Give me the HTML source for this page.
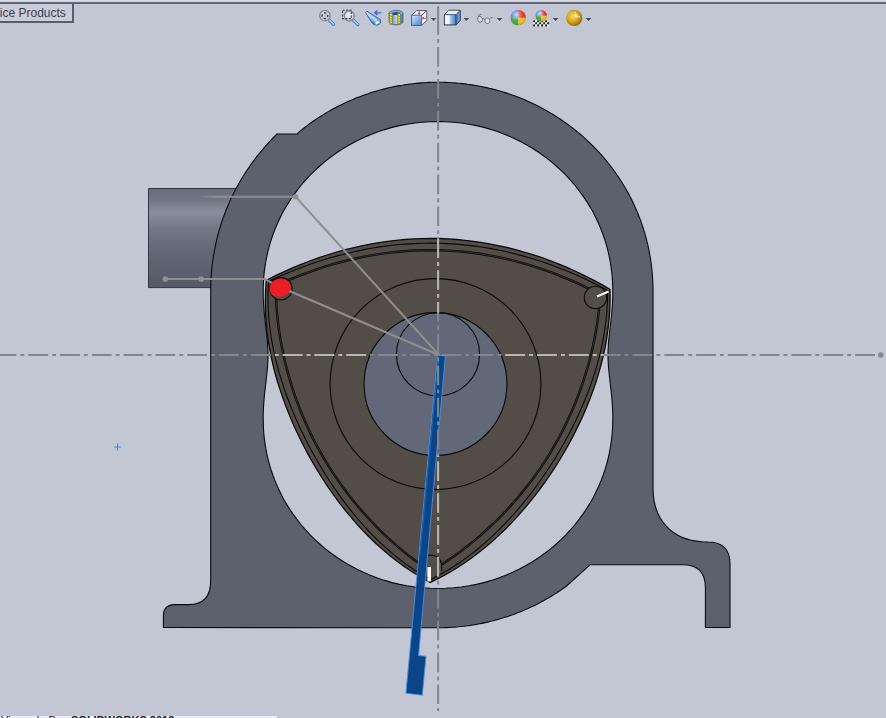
<!DOCTYPE html>
<html><head><meta charset="utf-8"><title>SolidWorks</title>
<style>
html,body{margin:0;padding:0;}
body{width:886px;height:718px;overflow:hidden;background:#c3c7d3;position:relative;font-family:"Liberation Sans",sans-serif;}
#view{position:absolute;left:0;top:0;width:886px;height:718px;}
#tab{position:absolute;left:-11.8px;top:4px;width:82px;height:16.5px;border:2px solid #5a5c6e;border-top:none;background:#cacdd9;color:#3a3c4e;font-size:12px;line-height:17px;white-space:nowrap;}
#tab span{position:absolute;left:9.6px;top:0.5px;}
#topline{position:absolute;left:0;top:0;width:886px;height:4.4px;background:linear-gradient(#dfe1ea 0,#c9ccd8 45%,#6c6e82 62%,#56586a 100%);}
#bottom{position:absolute;left:0;top:715.7px;width:277px;height:3px;background:#eceef3;overflow:hidden;font-size:11px;line-height:11px;color:#1a1a1a;white-space:nowrap;}
#bottom span{position:absolute;left:71px;top:-0.6px;font-weight:bold;}
#bottom i{position:absolute;left:1px;top:-0.6px;font-style:normal;}
</style></head><body>
<svg id="view" width="886" height="718" viewBox="0 0 886 718">
<defs>
<linearGradient id="pipe" x1="0" y1="0" x2="0" y2="1">
<stop offset="0" stop-color="#6a6e7c"/><stop offset="0.1" stop-color="#707482"/><stop offset="0.24" stop-color="#8a8e9c"/><stop offset="0.4" stop-color="#747886"/><stop offset="0.62" stop-color="#656977"/><stop offset="1" stop-color="#555966"/>
</linearGradient>
<linearGradient id="fade" gradientUnits="userSpaceOnUse" x1="198" y1="0" x2="216" y2="0"><stop offset="0" stop-color="#8e8e8c" stop-opacity="0"/><stop offset="1" stop-color="#8e8e8c" stop-opacity="1"/></linearGradient>
<clipPath id="rotclip"><path d="M430.3 582.4 L439.4 577.9 L448.1 573.2 L456.4 568.2 L464.4 563.0 L472.1 557.6 L479.4 552.0 L486.5 546.3 L493.3 540.4 L499.9 534.4 L506.3 528.2 L512.4 521.9 L518.4 515.4 L524.1 508.9 L529.7 502.2 L535.1 495.4 L540.3 488.5 L545.4 481.6 L550.3 474.5 L555.0 467.3 L559.6 460.0 L564.0 452.6 L568.2 445.2 L572.3 437.6 L576.2 429.9 L580.0 422.1 L583.6 414.3 L587.0 406.3 L590.2 398.2 L593.3 389.9 L596.1 381.6 L598.7 373.1 L601.1 364.5 L603.3 355.8 L605.2 346.8 L606.8 337.8 L608.1 328.5 L609.1 319.0 L609.8 309.3 L610.1 299.4 L609.9 289.3 L601.5 284.4 L593.0 279.9 L584.5 275.6 L576.0 271.5 L567.5 267.7 L559.0 264.1 L550.5 260.8 L542.0 257.7 L533.5 254.9 L524.9 252.3 L516.4 249.9 L507.9 247.7 L499.3 245.8 L490.8 244.1 L482.2 242.6 L473.6 241.3 L465.1 240.3 L456.5 239.5 L447.9 238.9 L439.3 238.5 L430.7 238.4 L422.1 238.6 L413.5 238.9 L404.9 239.5 L396.3 240.3 L387.6 241.4 L379.0 242.6 L370.4 244.1 L361.7 245.8 L353.1 247.8 L344.4 249.9 L335.8 252.3 L327.1 255.0 L318.4 257.8 L309.7 261.0 L301.1 264.3 L292.4 267.9 L283.7 271.8 L275.0 275.9 L266.3 280.3 L265.6 290.4 L265.3 300.4 L265.4 310.1 L265.9 319.6 L266.7 328.9 L267.8 338.1 L269.3 347.1 L271.0 356.0 L272.9 364.7 L275.1 373.3 L277.5 381.7 L280.2 390.1 L283.0 398.3 L286.0 406.5 L289.2 414.5 L292.5 422.5 L296.1 430.4 L299.8 438.1 L303.6 445.8 L307.6 453.4 L311.8 460.9 L316.2 468.4 L320.7 475.7 L325.3 482.9 L330.2 490.1 L335.2 497.1 L340.4 504.1 L345.8 511.0 L351.4 517.7 L357.1 524.4 L363.1 530.9 L369.4 537.3 L375.9 543.5 L382.7 549.6 L389.7 555.6 L397.1 561.3 L404.8 566.9 L412.9 572.3 L421.4 577.5 Z M506.9 384.0 a71.4 71.4 0 1 0 -142.8 0 a71.4 71.4 0 1 0 142.8 0 Z" clip-rule="evenodd"/></clipPath>
</defs>
<!-- intake pipe -->
<path d="M148.5 188.5 L236 188.5 L236 287.6 L148.5 287.6 Z" fill="url(#pipe)" stroke="#34363f" stroke-width="1"/>
<!-- housing -->
<path d="M297.5 133.3 L299.4 131.7 L301.4 130.1 L303.4 128.5 L305.4 126.9 L307.5 125.4 L309.6 123.8 L311.7 122.3 L313.8 120.8 L315.9 119.4 L318.1 117.9 L320.3 116.5 L322.5 115.1 L324.7 113.8 L327.0 112.4 L329.2 111.1 L331.5 109.8 L333.8 108.5 L336.2 107.3 L338.5 106.1 L340.9 104.9 L343.3 103.7 L345.7 102.6 L348.1 101.5 L350.5 100.4 L353.0 99.4 L355.5 98.3 L358.0 97.3 L360.5 96.4 L363.0 95.4 L365.5 94.5 L368.1 93.7 L370.6 92.8 L373.2 92.0 L375.8 91.2 L378.4 90.5 L381.0 89.8 L383.6 89.1 L386.3 88.4 L388.9 87.8 L391.6 87.2 L394.2 86.6 L396.9 86.1 L399.6 85.6 L402.3 85.2 L405.0 84.7 L407.7 84.4 L410.4 84.0 L413.1 83.7 L415.8 83.4 L418.5 83.1 L421.2 82.9 L424.0 82.7 L426.7 82.5 L429.4 82.4 L432.2 82.3 L434.9 82.3 L437.6 82.3 L440.4 82.3 L443.1 82.3 L445.9 82.4 L448.6 82.5 L451.4 82.7 L454.1 82.8 L456.9 83.1 L459.6 83.3 L462.3 83.6 L465.1 83.9 L467.8 84.3 L470.5 84.6 L473.2 85.1 L475.9 85.5 L478.6 86.0 L481.3 86.5 L484.0 87.1 L486.6 87.6 L489.3 88.3 L491.9 88.9 L494.6 89.6 L497.2 90.3 L499.8 91.0 L502.4 91.8 L505.0 92.6 L507.6 93.4 L510.1 94.3 L512.7 95.2 L515.2 96.1 L517.7 97.1 L520.3 98.1 L522.7 99.1 L525.2 100.1 L527.7 101.2 L530.1 102.3 L532.5 103.4 L534.9 104.6 L537.3 105.8 L539.7 107.0 L542.0 108.2 L544.4 109.5 L546.7 110.8 L548.9 112.1 L551.2 113.4 L553.5 114.8 L555.7 116.2 L557.9 117.6 L560.1 119.0 L562.2 120.5 L564.3 122.0 L566.5 123.5 L568.5 125.0 L570.6 126.5 L572.7 128.1 L574.7 129.7 L576.7 131.3 L578.6 132.9 L580.6 134.5 L582.5 136.2 L584.4 137.9 L586.2 139.6 L588.1 141.3 L589.9 143.0 L591.7 144.8 L593.4 146.5 L595.2 148.3 L596.9 150.1 L598.6 151.9 L600.2 153.7 L601.9 155.5 L603.5 157.4 L605.0 159.2 L606.6 161.1 L608.1 163.0 L609.6 164.9 L611.1 166.8 L612.5 168.7 L613.9 170.6 L615.3 172.5 L616.6 174.5 L618.0 176.4 L619.3 178.3 L620.5 180.3 L621.8 182.3 L623.0 184.2 L624.2 186.2 L625.4 188.2 L626.5 190.1 L627.6 192.1 L628.7 194.1 L629.7 196.1 L630.8 198.1 L631.8 200.1 L632.8 202.1 L633.7 204.1 L634.6 206.0 L635.5 208.0 L636.4 210.0 L637.2 212.0 L638.1 214.0 L638.8 216.0 L639.6 218.0 L640.4 219.9 L641.1 221.9 L641.8 223.9 L642.4 225.9 L643.1 227.8 L643.7 229.8 L644.3 231.7 L644.9 233.7 L645.4 235.6 L646.0 237.5 L646.5 239.4 L646.9 241.4 L647.4 243.3 L647.9 245.2 L648.3 247.1 L648.7 248.9 L649.1 250.8 L649.4 252.7 L649.7 254.5 L650.1 256.3 L650.4 258.2 L650.7 260.0 L650.9 261.8 L651.2 263.6 L651.4 265.4 L651.6 267.1 L651.8 268.9 L652.0 270.6 L652.1 272.3 L652.3 274.0 L652.4 275.7 L652.5 277.4 L652.6 279.1 L652.7 280.8 L652.8 282.4 L652.9 284.0 L652.9 285.6 L653.0 287.2 L653.0 288.8 L653.0 290.4 L653.0 291.9 L653.0 488 C653.0 520 672 540 702 541.8 L708 542 Q730 542 730 564 L730 627.5 L705.4 627.5 L705.4 588 Q705.4 564.8 683 564.8 L590 564.8 L566.0 586.5 L564.2 587.8 L562.4 589.0 L560.6 590.3 L558.7 591.5 L556.9 592.7 L555.0 593.9 L553.2 595.1 L551.3 596.2 L549.4 597.4 L547.4 598.5 L545.5 599.6 L543.5 600.7 L541.6 601.8 L539.6 602.8 L537.6 603.9 L535.6 604.9 L533.6 605.9 L531.5 606.8 L529.5 607.8 L527.4 608.7 L525.4 609.6 L523.3 610.5 L521.2 611.4 L519.1 612.3 L517.0 613.1 L514.8 613.9 L512.7 614.7 L510.5 615.4 L508.4 616.2 L506.2 616.9 L504.0 617.6 L501.8 618.3 L499.6 618.9 L497.4 619.6 L495.2 620.2 L493.0 620.8 L490.8 621.3 L488.5 621.9 L486.3 622.4 L484.0 622.9 L481.8 623.4 L479.5 623.8 L477.2 624.2 L474.9 624.6 L472.7 625.0 L470.4 625.4 L468.1 625.7 L465.8 626.0 L463.5 626.3 L461.2 626.5 L458.9 626.8 L456.6 627.0 L454.2 627.2 L451.9 627.3 L449.6 627.4 L447.3 627.6 L445.0 627.6 L442.6 627.7 L440.3 627.7 L438.0 627.8 L172 627.5 L163.4 627.5 L163.4 616 Q163.4 604.6 175 604.6 L188.5 604.6 Q210.7 604.6 210.7 581 L210.7 291.9 L210.7 289.7 L210.7 287.5 L210.8 285.3 L210.8 283.0 L210.9 280.7 L211.1 278.4 L211.2 276.0 L211.4 273.6 L211.6 271.2 L211.8 268.8 L212.1 266.3 L212.4 263.8 L212.7 261.3 L213.1 258.8 L213.4 256.2 L213.9 253.6 L214.3 251.0 L214.8 248.4 L215.4 245.8 L215.9 243.1 L216.6 240.4 L217.2 237.7 L217.9 235.0 L218.6 232.3 L219.4 229.5 L220.3 226.8 L221.1 224.0 L222.0 221.2 L223.0 218.4 L224.0 215.7 L225.0 212.9 L226.1 210.0 L227.3 207.2 L228.5 204.4 L229.7 201.6 L231.0 198.8 L232.3 196.0 L233.7 193.2 L235.1 190.3 L236.6 187.5 L238.2 184.7 L239.8 181.9 L241.4 179.1 L243.1 176.3 L244.8 173.6 L246.6 170.8 L248.5 168.1 L250.3 165.3 L252.3 162.6 L254.3 159.9 L256.3 157.2 L258.4 154.5 L260.6 151.9 L262.8 149.3 L265.0 146.7 L267.3 144.1 L269.7 141.5 L272.1 139.0 L274.5 136.5 L277.0 134.0 L297.5 134 Z M438.0 588.5 L445.8 588.3 L453.5 587.8 L461.2 587.0 L468.9 585.8 L476.5 584.4 L484.0 582.6 L491.4 580.4 L498.6 578.0 L505.7 575.3 L512.7 572.3 L519.4 569.1 L526.0 565.5 L532.4 561.8 L538.6 557.8 L544.5 553.5 L550.3 549.1 L555.7 544.5 L561.0 539.7 L565.9 534.8 L570.6 529.7 L575.1 524.5 L579.2 519.2 L583.1 513.9 L586.8 508.4 L590.2 502.9 L593.3 497.4 L596.1 491.8 L598.7 486.3 L601.0 480.7 L603.1 475.2 L605.0 469.7 L606.6 464.3 L608.0 459.0 L609.2 453.7 L610.2 448.5 L611.0 443.4 L611.7 438.4 L612.2 433.5 L612.5 428.8 L612.7 424.1 L612.8 419.6 L612.8 415.2 L612.7 411.0 L612.5 406.9 L612.2 402.9 L611.9 399.0 L611.6 395.3 L611.2 391.7 L610.8 388.2 L610.4 384.8 L610.0 381.5 L609.7 378.3 L609.3 375.2 L609.0 372.1 L608.7 369.2 L608.4 366.3 L608.3 363.4 L608.1 360.6 L608.0 357.8 L608.0 355.0 L608.0 352.2 L608.1 349.4 L608.3 346.6 L608.4 343.7 L608.7 340.8 L609.0 337.9 L609.3 334.8 L609.7 331.7 L610.0 328.5 L610.4 325.2 L610.8 321.8 L611.2 318.3 L611.6 314.7 L611.9 311.0 L612.2 307.1 L612.5 303.1 L612.7 299.0 L612.8 294.8 L612.8 290.4 L612.7 285.9 L612.5 281.2 L612.2 276.5 L611.7 271.6 L611.0 266.6 L610.2 261.5 L609.2 256.3 L608.0 251.0 L606.6 245.7 L605.0 240.3 L603.1 234.8 L601.0 229.3 L598.7 223.7 L596.1 218.2 L593.3 212.6 L590.2 207.1 L586.8 201.6 L583.1 196.1 L579.2 190.8 L575.1 185.5 L570.6 180.3 L565.9 175.2 L561.0 170.3 L555.7 165.5 L550.3 160.9 L544.5 156.5 L538.6 152.2 L532.4 148.2 L526.0 144.5 L519.4 140.9 L512.7 137.7 L505.7 134.7 L498.6 132.0 L491.4 129.6 L484.0 127.4 L476.5 125.6 L468.9 124.2 L461.2 123.0 L453.5 122.2 L445.8 121.7 L438.0 121.5 L430.2 121.7 L422.5 122.2 L414.8 123.0 L407.1 124.2 L399.5 125.6 L392.0 127.4 L384.6 129.6 L377.4 132.0 L370.3 134.7 L363.3 137.7 L356.6 140.9 L350.0 144.5 L343.6 148.2 L337.4 152.2 L331.5 156.5 L325.7 160.9 L320.3 165.5 L315.0 170.3 L310.1 175.2 L305.4 180.3 L300.9 185.5 L296.8 190.8 L292.9 196.1 L289.2 201.6 L285.8 207.1 L282.7 212.6 L279.9 218.2 L277.3 223.7 L275.0 229.3 L272.9 234.8 L271.0 240.3 L269.4 245.7 L268.0 251.0 L266.8 256.3 L265.8 261.5 L265.0 266.6 L264.3 271.6 L263.8 276.5 L263.5 281.2 L263.3 285.9 L263.2 290.4 L263.2 294.8 L263.3 299.0 L263.5 303.1 L263.8 307.1 L264.1 311.0 L264.4 314.7 L264.8 318.3 L265.2 321.8 L265.6 325.2 L266.0 328.5 L266.3 331.7 L266.7 334.8 L267.0 337.9 L267.3 340.8 L267.6 343.7 L267.7 346.6 L267.9 349.4 L268.0 352.2 L268.0 355.0 L268.0 357.8 L267.9 360.6 L267.7 363.4 L267.6 366.3 L267.3 369.2 L267.0 372.1 L266.7 375.2 L266.3 378.3 L266.0 381.5 L265.6 384.8 L265.2 388.2 L264.8 391.7 L264.4 395.3 L264.1 399.0 L263.8 402.9 L263.5 406.9 L263.3 411.0 L263.2 415.2 L263.2 419.6 L263.3 424.1 L263.5 428.8 L263.8 433.5 L264.3 438.4 L265.0 443.4 L265.8 448.5 L266.8 453.7 L268.0 459.0 L269.4 464.3 L271.0 469.7 L272.9 475.2 L275.0 480.7 L277.3 486.3 L279.9 491.8 L282.7 497.4 L285.8 502.9 L289.2 508.4 L292.9 513.9 L296.8 519.2 L300.9 524.5 L305.4 529.7 L310.1 534.8 L315.0 539.7 L320.3 544.5 L325.7 549.1 L331.5 553.5 L337.4 557.8 L343.6 561.8 L350.0 565.5 L356.6 569.1 L363.3 572.3 L370.3 575.3 L377.4 578.0 L384.6 580.4 L392.0 582.6 L399.5 584.4 L407.1 585.8 L414.8 587.0 L422.5 587.8 L430.2 588.3 Z" fill="#5d616e" fill-rule="evenodd" stroke="#0a0a0c" stroke-width="1.1" stroke-linejoin="round"/>
<!-- rotor -->
<path d="M430.3 582.4 L439.4 577.9 L448.1 573.2 L456.4 568.2 L464.4 563.0 L472.1 557.6 L479.4 552.0 L486.5 546.3 L493.3 540.4 L499.9 534.4 L506.3 528.2 L512.4 521.9 L518.4 515.4 L524.1 508.9 L529.7 502.2 L535.1 495.4 L540.3 488.5 L545.4 481.6 L550.3 474.5 L555.0 467.3 L559.6 460.0 L564.0 452.6 L568.2 445.2 L572.3 437.6 L576.2 429.9 L580.0 422.1 L583.6 414.3 L587.0 406.3 L590.2 398.2 L593.3 389.9 L596.1 381.6 L598.7 373.1 L601.1 364.5 L603.3 355.8 L605.2 346.8 L606.8 337.8 L608.1 328.5 L609.1 319.0 L609.8 309.3 L610.1 299.4 L609.9 289.3 L601.5 284.4 L593.0 279.9 L584.5 275.6 L576.0 271.5 L567.5 267.7 L559.0 264.1 L550.5 260.8 L542.0 257.7 L533.5 254.9 L524.9 252.3 L516.4 249.9 L507.9 247.7 L499.3 245.8 L490.8 244.1 L482.2 242.6 L473.6 241.3 L465.1 240.3 L456.5 239.5 L447.9 238.9 L439.3 238.5 L430.7 238.4 L422.1 238.6 L413.5 238.9 L404.9 239.5 L396.3 240.3 L387.6 241.4 L379.0 242.6 L370.4 244.1 L361.7 245.8 L353.1 247.8 L344.4 249.9 L335.8 252.3 L327.1 255.0 L318.4 257.8 L309.7 261.0 L301.1 264.3 L292.4 267.9 L283.7 271.8 L275.0 275.9 L266.3 280.3 L265.6 290.4 L265.3 300.4 L265.4 310.1 L265.9 319.6 L266.7 328.9 L267.8 338.1 L269.3 347.1 L271.0 356.0 L272.9 364.7 L275.1 373.3 L277.5 381.7 L280.2 390.1 L283.0 398.3 L286.0 406.5 L289.2 414.5 L292.5 422.5 L296.1 430.4 L299.8 438.1 L303.6 445.8 L307.6 453.4 L311.8 460.9 L316.2 468.4 L320.7 475.7 L325.3 482.9 L330.2 490.1 L335.2 497.1 L340.4 504.1 L345.8 511.0 L351.4 517.7 L357.1 524.4 L363.1 530.9 L369.4 537.3 L375.9 543.5 L382.7 549.6 L389.7 555.6 L397.1 561.3 L404.8 566.9 L412.9 572.3 L421.4 577.5 Z" fill="#524d46" stroke="#0a0a0c" stroke-width="1.3" stroke-linejoin="miter"/>
<path d="M430.4 579.7 L439.1 575.1 L447.5 570.3 L455.5 565.3 L463.2 560.1 L470.6 554.6 L477.7 549.0 L484.5 543.3 L491.1 537.4 L497.4 531.3 L503.6 525.2 L509.5 518.9 L515.3 512.5 L520.9 505.9 L526.3 499.3 L531.6 492.6 L536.7 485.8 L541.6 478.8 L546.4 471.8 L551.0 464.8 L555.6 457.6 L559.9 450.3 L564.1 442.9 L568.2 435.5 L572.1 427.9 L575.9 420.3 L579.5 412.6 L582.9 404.7 L586.2 396.8 L589.3 388.7 L592.2 380.6 L594.9 372.3 L597.4 363.9 L599.7 355.3 L601.7 346.6 L603.5 337.8 L604.9 328.7 L606.1 319.5 L607.0 310.1 L607.5 300.4 L607.6 290.6 L599.2 286.1 L590.8 281.8 L582.5 277.8 L574.1 274.0 L565.7 270.5 L557.3 267.2 L548.9 264.1 L540.5 261.2 L532.1 258.5 L523.7 256.1 L515.2 253.9 L506.8 251.8 L498.4 250.0 L489.9 248.4 L481.5 247.0 L473.0 245.9 L464.6 244.9 L456.1 244.1 L447.7 243.6 L439.2 243.2 L430.7 243.1 L422.2 243.2 L413.7 243.6 L405.2 244.1 L396.7 244.8 L388.2 245.8 L379.7 246.9 L371.2 248.3 L362.7 249.9 L354.2 251.7 L345.6 253.7 L337.1 255.9 L328.5 258.3 L320.0 261.0 L311.4 263.8 L302.9 266.9 L294.3 270.3 L285.7 273.8 L277.1 277.6 L268.6 281.7 L268.1 291.6 L268.0 301.3 L268.4 310.7 L269.0 320.0 L270.0 329.1 L271.3 338.1 L272.9 346.9 L274.7 355.5 L276.8 364.1 L279.1 372.5 L281.6 380.7 L284.3 388.9 L287.1 397.0 L290.2 405.0 L293.4 412.9 L296.8 420.7 L300.3 428.5 L304.0 436.1 L307.8 443.7 L311.8 451.2 L315.9 458.6 L320.2 465.9 L324.6 473.2 L329.1 480.3 L333.9 487.4 L338.7 494.4 L343.8 501.3 L349.0 508.2 L354.4 514.9 L360.0 521.5 L365.8 528.0 L371.8 534.4 L378.1 540.6 L384.6 546.7 L391.4 552.7 L398.5 558.5 L405.9 564.1 L413.7 569.5 L421.8 574.7 Z" fill="none" stroke="#0a0a0c" stroke-width="1.1"/>
<path d="M430.6 571.4 L438.4 566.7 L445.9 561.8 L453.3 556.8 L460.4 551.6 L467.3 546.3 L474.0 540.9 L480.5 535.4 L486.8 529.7 L493.0 524.0 L499.0 518.1 L504.8 512.2 L510.4 506.1 L515.9 499.9 L521.2 493.6 L526.3 487.3 L531.3 480.8 L536.1 474.2 L540.8 467.6 L545.3 460.8 L549.6 453.9 L553.7 446.9 L557.7 439.9 L561.6 432.7 L565.2 425.4 L568.7 418.0 L572.1 410.6 L575.3 403.0 L578.3 395.3 L581.1 387.5 L583.8 379.7 L586.3 371.7 L588.7 363.6 L590.8 355.4 L592.8 347.1 L594.5 338.6 L596.1 330.1 L597.5 321.4 L598.6 312.6 L599.6 303.6 L600.3 294.5 L592.3 290.3 L584.2 286.3 L576.2 282.6 L568.2 279.1 L560.2 275.8 L552.1 272.7 L544.1 269.8 L536.0 267.1 L528.0 264.6 L519.9 262.3 L511.8 260.2 L503.8 258.3 L495.7 256.6 L487.6 255.1 L479.5 253.8 L471.4 252.7 L463.3 251.8 L455.2 251.1 L447.1 250.6 L439.0 250.2 L430.9 250.1 L422.8 250.2 L414.6 250.5 L406.5 251.0 L398.4 251.7 L390.2 252.6 L382.1 253.6 L373.9 254.9 L365.7 256.4 L357.6 258.0 L349.4 259.9 L341.2 262.0 L333.1 264.2 L324.9 266.7 L316.7 269.4 L308.5 272.3 L300.3 275.4 L292.1 278.7 L283.9 282.2 L275.6 286.0 L275.8 295.2 L276.3 304.1 L277.0 313.0 L277.9 321.8 L279.0 330.4 L280.3 338.9 L281.9 347.3 L283.6 355.6 L285.5 363.8 L287.6 371.9 L289.9 379.9 L292.3 387.8 L294.9 395.7 L297.7 403.4 L300.6 411.0 L303.8 418.6 L307.1 426.0 L310.5 433.4 L314.1 440.7 L317.9 447.8 L321.9 454.9 L326.0 461.9 L330.3 468.8 L334.8 475.7 L339.4 482.4 L344.2 489.0 L349.1 495.6 L354.3 502.0 L359.6 508.4 L365.1 514.6 L370.7 520.8 L376.6 526.9 L382.6 532.8 L388.8 538.7 L395.2 544.4 L401.9 550.1 L408.7 555.6 L415.8 561.0 L423.1 566.3 Z" fill="none" stroke="#0a0a0c" stroke-width="2.4"/>
<path d="M430.6 571.4 L438.4 566.7 L445.9 561.8 L453.3 556.8 L460.4 551.6 L467.3 546.3 L474.0 540.9 L480.5 535.4 L486.8 529.7 L493.0 524.0 L499.0 518.1 L504.8 512.2 L510.4 506.1 L515.9 499.9 L521.2 493.6 L526.3 487.3 L531.3 480.8 L536.1 474.2 L540.8 467.6 L545.3 460.8 L549.6 453.9 L553.7 446.9 L557.7 439.9 L561.6 432.7 L565.2 425.4 L568.7 418.0 L572.1 410.6 L575.3 403.0 L578.3 395.3 L581.1 387.5 L583.8 379.7 L586.3 371.7 L588.7 363.6 L590.8 355.4 L592.8 347.1 L594.5 338.6 L596.1 330.1 L597.5 321.4 L598.6 312.6 L599.6 303.6 L600.3 294.5 L592.3 290.3 L584.2 286.3 L576.2 282.6 L568.2 279.1 L560.2 275.8 L552.1 272.7 L544.1 269.8 L536.0 267.1 L528.0 264.6 L519.9 262.3 L511.8 260.2 L503.8 258.3 L495.7 256.6 L487.6 255.1 L479.5 253.8 L471.4 252.7 L463.3 251.8 L455.2 251.1 L447.1 250.6 L439.0 250.2 L430.9 250.1 L422.8 250.2 L414.6 250.5 L406.5 251.0 L398.4 251.7 L390.2 252.6 L382.1 253.6 L373.9 254.9 L365.7 256.4 L357.6 258.0 L349.4 259.9 L341.2 262.0 L333.1 264.2 L324.9 266.7 L316.7 269.4 L308.5 272.3 L300.3 275.4 L292.1 278.7 L283.9 282.2 L275.6 286.0 L275.8 295.2 L276.3 304.1 L277.0 313.0 L277.9 321.8 L279.0 330.4 L280.3 338.9 L281.9 347.3 L283.6 355.6 L285.5 363.8 L287.6 371.9 L289.9 379.9 L292.3 387.8 L294.9 395.7 L297.7 403.4 L300.6 411.0 L303.8 418.6 L307.1 426.0 L310.5 433.4 L314.1 440.7 L317.9 447.8 L321.9 454.9 L326.0 461.9 L330.3 468.8 L334.8 475.7 L339.4 482.4 L344.2 489.0 L349.1 495.6 L354.3 502.0 L359.6 508.4 L365.1 514.6 L370.7 520.8 L376.6 526.9 L382.6 532.8 L388.8 538.7 L395.2 544.4 L401.9 550.1 L408.7 555.6 L415.8 561.0 L423.1 566.3 Z" fill="none" stroke="#524d46" stroke-width="0.7" opacity="0.75"/>
<circle cx="435.5" cy="384.0" r="105.4" fill="none" stroke="#0a0a0c" stroke-width="1.1"/>
<circle cx="435.5" cy="384.0" r="71.4" fill="#636878" stroke="#0a0a0c" stroke-width="1.1"/>
<circle cx="438" cy="354.3" r="41.6" fill="none" stroke="#0a0a0c" stroke-width="1.1"/>
<!-- apex seals -->
<circle cx="595.5" cy="297.5" r="11.2" fill="#524d46" stroke="#0a0a0c" stroke-width="1.1"/>
<line x1="597" y1="296.6" x2="608.6" y2="291.6" stroke="#f2f2f2" stroke-width="2.2"/>
<circle cx="281" cy="288.8" r="11.2" fill="#524d46" stroke="#0a0a0c" stroke-width="1.1"/>
<circle cx="431" cy="566" r="10.4" fill="#524d46"/>
<path d="M421.5 561 A10.8 10.8 0 0 1 441.6 563.5 L441.8 571" fill="none" stroke="#0a0a0c" stroke-width="1.1"/>
<rect x="427.4" y="567" width="3.6" height="14.4" fill="#f4f4f4"/>
<!-- construction lines -->
<g stroke="#8e8e8c" stroke-width="2" fill="none" stroke-linecap="round" stroke-linejoin="round">
<path d="M216 196.8 L295.7 196.8 L439 355"/>
<path d="M198 196.8 L216.5 196.8" stroke="url(#fade)" stroke-linecap="butt"/>
<path d="M165.3 279.1 L265 279.1 L280 287 L439 355"/>
</g>
<g fill="#929292"><circle cx="165.3" cy="279.1" r="2.8"/><circle cx="201.2" cy="279.1" r="2.8"/><circle cx="295.7" cy="196.8" r="2.8"/></g>
<ellipse cx="280.1" cy="287.8" rx="10.8" ry="9" transform="rotate(-15 280.1 287.8)" fill="#ee1c24"/>
<!-- needle -->
<path d="M437.7 355.4 L445.4 355.9 L418.6 655.6 L426 656.2 L422.3 695.2 L405.9 693.2 Z" fill="#0b4587" stroke="#4a92e4" stroke-width="0.9" stroke-linejoin="round"/>
<path d="M438.7 356.4 L420 555" stroke="#1c62b4" stroke-width="1.2" fill="none"/>
<!-- centre lines -->
<g stroke="#84868d" fill="none" stroke-width="2">
<line x1="-3.5" y1="355" x2="879" y2="355" stroke-dasharray="19.8 4.1 3.8 4.1"/>
<line x1="438.1" y1="15.2" x2="438.1" y2="711" stroke-dasharray="19.6 4.2 3.8 4.27"/>
<line x1="438.1" y1="6.3" x2="438.1" y2="15.4"/>
</g>
<g stroke="#b6b6b2" fill="none" stroke-width="2" clip-path="url(#rotclip)">
<line x1="-3.5" y1="355" x2="879" y2="355" stroke-dasharray="19.8 4.1 3.8 4.1"/>
<line x1="438.1" y1="15.2" x2="438.1" y2="711" stroke-dasharray="19.6 4.2 3.8 4.27"/>
</g>
<circle cx="880.8" cy="355" r="2.7" fill="#86888e"/>
<!-- small plus -->
<path d="M114 447 H121 M117.5 443.5 V450.5" stroke="#4a8ad8" stroke-width="1.1" fill="none"/>
<!-- toolbar -->
<defs>
<radialGradient id="gLens" cx="0.4" cy="0.35" r="0.7"><stop offset="0" stop-color="#eceef3"/><stop offset="1" stop-color="#c4c8d2"/></radialGradient>
<linearGradient id="gHandle" x1="0" y1="0" x2="1" y2="1"><stop offset="0" stop-color="#9ccdf6"/><stop offset="1" stop-color="#2f7fd0"/></linearGradient>
<linearGradient id="gCubeF" x1="0" y1="0" x2="1" y2="1"><stop offset="0" stop-color="#d6e6fa"/><stop offset="1" stop-color="#3f86d8"/></linearGradient>
<linearGradient id="gCubeF2" x1="0" y1="0" x2="1" y2="0"><stop offset="0" stop-color="#f6f8fc"/><stop offset="0.42" stop-color="#eef3fb"/><stop offset="0.5" stop-color="#a8c8f2"/><stop offset="1" stop-color="#3c7cd4"/></linearGradient>
<linearGradient id="gCubeS" x1="0" y1="0" x2="1" y2="0"><stop offset="0" stop-color="#4a7cd0"/><stop offset="1" stop-color="#7aa4e4"/></linearGradient>
<linearGradient id="gSecIn" x1="0" y1="0" x2="1" y2="0"><stop offset="0" stop-color="#5a96dc"/><stop offset="0.6" stop-color="#c4dcf6"/><stop offset="1" stop-color="#6aa0e0"/></linearGradient>
<radialGradient id="gGold" cx="0.42" cy="0.4" r="0.62"><stop offset="0" stop-color="#f8dc70"/><stop offset="0.55" stop-color="#daa61a"/><stop offset="1" stop-color="#8c6810"/></radialGradient>
<radialGradient id="gShade" cx="0.38" cy="0.3" r="0.8"><stop offset="0" stop-color="#ffffff" stop-opacity="0.75"/><stop offset="0.5" stop-color="#ffffff" stop-opacity="0.05"/><stop offset="1" stop-color="#000000" stop-opacity="0.3"/></radialGradient>
<linearGradient id="gTorch" x1="0.8" y1="0.15" x2="0.2" y2="0.85"><stop offset="0.15" stop-color="#2a68bc"/><stop offset="0.5" stop-color="#c4e6fc"/><stop offset="0.85" stop-color="#2a68bc"/></linearGradient>
</defs>
<line x1="328.9" y1="19.9" x2="333.5" y2="24.299999999999997" stroke="#3a7cc8" stroke-width="3.1" stroke-linecap="round"/>
<line x1="329.09999999999997" y1="19.9" x2="333.4" y2="24.1" stroke="#9ccbf4" stroke-width="1.6" stroke-linecap="round"/>
<circle cx="324.9" cy="15.7" r="5.2" fill="url(#gLens)" stroke="#868a94" stroke-width="1.4"/>
<circle cx="324.9" cy="15.7" r="2.9" fill="#c4c8d0" stroke="#2c3038" stroke-width="1.3" stroke-dasharray="2.6 1.95" stroke-dashoffset="1.3"/>
<line x1="353.3" y1="20.2" x2="357.90000000000003" y2="24.6" stroke="#3a7cc8" stroke-width="3.1" stroke-linecap="round"/>
<line x1="353.5" y1="20.2" x2="357.8" y2="24.4" stroke="#9ccbf4" stroke-width="1.6" stroke-linecap="round"/>
<circle cx="349.3" cy="16.0" r="5.0" fill="url(#gLens)" stroke="#868a94" stroke-width="1.4"/>
<rect x="342.5" y="10.2" width="8.8" height="8.4" fill="none" stroke="#3c4048" stroke-width="1.1" stroke-dasharray="2.2 1.3"/>
<path d="M365.6 12.7 L367 11.2 L380.2 19.4 Q381.8 22.4 379.2 24.6 Q375.6 26.2 372.4 23.4 Z" fill="url(#gTorch)" stroke="#2a62b4" stroke-width="0.9" stroke-linejoin="round"/>
<ellipse cx="377.2" cy="22.6" rx="2.6" ry="1.7" transform="rotate(-35 377.2 22.6)" fill="#f0f8ff" stroke="#3a80cc" stroke-width="0.6"/>
<path d="M380.8 12.9 H375 M377 10.9 L374.6 12.8 L377 14.8" fill="none" stroke="#3a6cd0" stroke-width="1.4" stroke-linejoin="round" stroke-linecap="round"/>
<path d="M389 13.4 Q396 8.4 403 13.4 V22.6 Q396 27.4 389 22.6 Z" fill="#4a86d0" stroke="#2c5c9c" stroke-width="0.7"/>
<ellipse cx="396" cy="13.2" rx="7" ry="2.9" fill="#7ab4ec" stroke="#2c5c9c" stroke-width="0.7"/>
<path d="M392.2 13.6 Q396 11.4 400.2 13.6 V24 H392.2 Z" fill="url(#gSecIn)"/>
<ellipse cx="396.2" cy="13.5" rx="4" ry="1.5" fill="#1c4a90"/>
<rect x="389.3" y="13.6" width="3" height="10.6" fill="#f4d62a" stroke="#7a6a10" stroke-width="0.5"/>
<rect x="397.3" y="13.6" width="3" height="10.6" fill="#f4d62a" stroke="#7a6a10" stroke-width="0.5"/>
<path d="M389.6 15.4 l2.4 1.4 M389.6 17.8 l2.4 1.4 M389.6 20.2 l2.4 1.4 M389.6 22.4 l2.4 1.4 M397.6 15.4 l2.4 1.4 M397.6 17.8 l2.4 1.4 M397.6 20.2 l2.4 1.4 M397.6 22.4 l2.4 1.4" stroke="#6a7a30" stroke-width="0.6"/>
<path d="M411.6 15.2 L416.6 10.6 H426.8 V20.6 L421.6 25.3 H411.6 Z" fill="#f0f3f8" stroke="#4a5060" stroke-width="0.9" stroke-linejoin="round"/>
<rect x="411.6" y="15.2" width="10" height="10.1" fill="url(#gCubeF)" stroke="#44608c" stroke-width="0.9"/>
<path d="M421.6 15.2 L426.8 10.6" stroke="#4a5060" stroke-width="0.9"/>
<path d="M419.2 11 v3.2 M418 13 l1.2 1.3 l1.2 -1.3 M425.8 18.2 h-3.2 M424 17 l-1.5 1.2 l1.5 1.2" fill="none" stroke="#e02828" stroke-width="0.9"/>
<path d="M430.8 17.9 h5.6 l-2.8 3.2 z" fill="#46466a"/>
<path d="M444.4 14.7 L448.6 10.2 H460.2 V20.4 L456.1 24.8 H444.4 Z" fill="#e6ebf4" stroke="#3c4454" stroke-width="0.9" stroke-linejoin="round"/>
<rect x="444.4" y="14.7" width="11.7" height="10.1" fill="url(#gCubeF2)" stroke="#3c4454" stroke-width="0.9"/>
<path d="M456.1 14.7 L460.2 10.2 V20.4 L456.1 24.8 Z" fill="url(#gCubeS)" stroke="#3c4454" stroke-width="0.9" stroke-linejoin="round"/>
<path d="M463.6 17.9 h5.6 l-2.8 3.2 z" fill="#46466a"/>
<g fill="#dde1e9" stroke="#6a7080" stroke-width="0.9"><ellipse cx="480" cy="19.3" rx="2.3" ry="3" transform="rotate(-14 480 19.3)"/><ellipse cx="487.4" cy="20.8" rx="2.5" ry="2.8" transform="rotate(-14 487.4 20.8)"/><path d="M482.2 18.8 Q483.6 17.6 485 19.6" fill="none"/><path d="M478.4 16.8 Q478 14 481.4 14.2" fill="none"/><path d="M489.6 19 Q490.4 17 492.8 17.6" fill="none"/></g>
<path d="M496.8 17.9 h5.6 l-2.8 3.2 z" fill="#46466a"/>
<clipPath id="cb1"><circle cx="518.2" cy="17.8" r="7.8"/></clipPath><g clip-path="url(#cb1)"><rect x="510.40000000000003" y="10.0" width="7.8" height="7.8" fill="#3478d8"/><rect x="518.2" y="10.0" width="7.8" height="7.8" fill="#e03028"/><rect x="510.40000000000003" y="17.8" width="7.8" height="7.8" fill="#38a838"/><rect x="518.2" y="17.8" width="7.8" height="7.8" fill="#f0c020"/><circle cx="518.2" cy="17.8" r="7.8" fill="url(#gShade)"/></g>
<rect x="533.2" y="20.4" width="2" height="2" fill="#1c1c1c"/><rect x="535.2" y="20.4" width="2" height="2" fill="#f4f4f4"/><rect x="537.2" y="20.4" width="2" height="2" fill="#1c1c1c"/><rect x="539.2" y="20.4" width="2" height="2" fill="#f4f4f4"/><rect x="541.2" y="20.4" width="2" height="2" fill="#1c1c1c"/><rect x="543.2" y="20.4" width="2" height="2" fill="#f4f4f4"/><rect x="545.2" y="20.4" width="2" height="2" fill="#1c1c1c"/><rect x="547.2" y="20.4" width="2" height="2" fill="#f4f4f4"/><rect x="533.2" y="22.4" width="2" height="2" fill="#f4f4f4"/><rect x="535.2" y="22.4" width="2" height="2" fill="#1c1c1c"/><rect x="537.2" y="22.4" width="2" height="2" fill="#f4f4f4"/><rect x="539.2" y="22.4" width="2" height="2" fill="#1c1c1c"/><rect x="541.2" y="22.4" width="2" height="2" fill="#f4f4f4"/><rect x="543.2" y="22.4" width="2" height="2" fill="#1c1c1c"/><rect x="545.2" y="22.4" width="2" height="2" fill="#f4f4f4"/><rect x="547.2" y="22.4" width="2" height="2" fill="#1c1c1c"/><rect x="533.2" y="24.4" width="2" height="2" fill="#1c1c1c"/><rect x="535.2" y="24.4" width="2" height="2" fill="#f4f4f4"/><rect x="537.2" y="24.4" width="2" height="2" fill="#1c1c1c"/><rect x="539.2" y="24.4" width="2" height="2" fill="#f4f4f4"/><rect x="541.2" y="24.4" width="2" height="2" fill="#1c1c1c"/><rect x="543.2" y="24.4" width="2" height="2" fill="#f4f4f4"/><rect x="545.2" y="24.4" width="2" height="2" fill="#1c1c1c"/><rect x="547.2" y="24.4" width="2" height="2" fill="#f4f4f4"/>
<clipPath id="cb2"><circle cx="541.2" cy="15.8" r="5.9"/></clipPath><g clip-path="url(#cb2)"><rect x="535.3000000000001" y="9.9" width="5.9" height="5.9" fill="#3478d8"/><rect x="541.2" y="9.9" width="5.9" height="5.9" fill="#e03028"/><rect x="535.3000000000001" y="15.8" width="5.9" height="5.9" fill="#38a838"/><rect x="541.2" y="15.8" width="5.9" height="5.9" fill="#f0c020"/><circle cx="541.2" cy="15.8" r="5.9" fill="url(#gShade)"/></g>
<path d="M552.8 17.9 h5.6 l-2.8 3.2 z" fill="#46466a"/>
<circle cx="574.2" cy="17.9" r="8.1" fill="url(#gGold)"/>
<path d="M575.4 11.6 V16.6 H580" fill="none" stroke="#fff2a8" stroke-width="1.1" opacity="0.75"/>
<ellipse cx="576.2" cy="15.6" rx="1.5" ry="1.8" fill="#fffbe0" opacity="0.8"/>
<path d="M585.7 17.9 h5.6 l-2.8 3.2 z" fill="#46466a"/>
</svg>
<div id="topline"></div>
<div id="tab"><span>ice Products</span></div>
<div id="bottom"><i>View&nbsp;&nbsp;&nbsp;&nbsp;l&nbsp;&nbsp;&nbsp;B</i><span>SOLIDWORKS 2012</span></div>
</body></html>
